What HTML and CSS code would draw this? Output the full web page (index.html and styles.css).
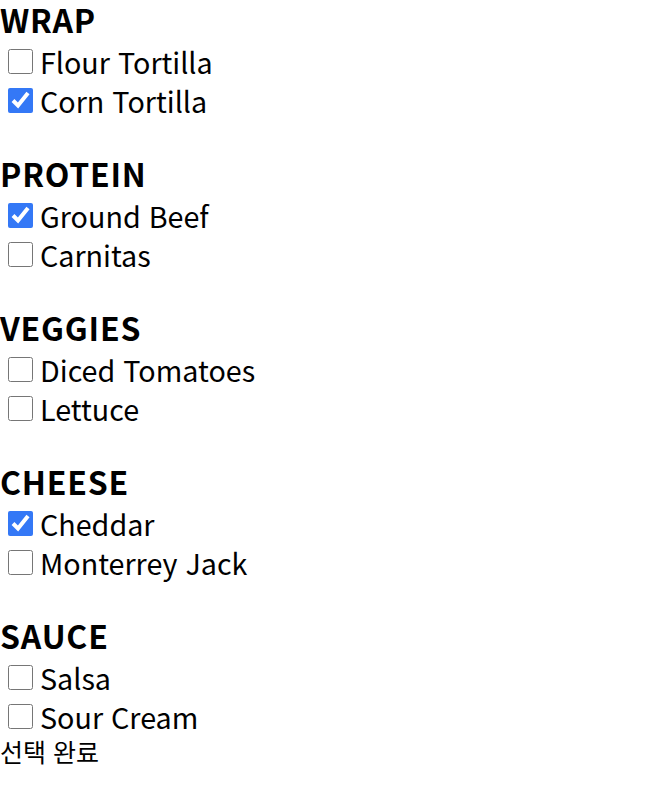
FILE: index.html
```html
<!DOCTYPE html>
<html lang="ko">
<head>
<meta charset="utf-8">
<link rel="stylesheet" href="styles.css">
</head>
<body>
<form class="menu">
  <section class="group">
    <h2 class="group-title">WRAP</h2>
    <label class="option"><input type="checkbox" class="box"><span>Flour Tortilla</span></label>
    <label class="option"><input type="checkbox" class="box" checked><span>Corn Tortilla</span></label>
  </section>
  <section class="group">
    <h2 class="group-title">PROTEIN</h2>
    <label class="option"><input type="checkbox" class="box" checked><span>Ground Beef</span></label>
    <label class="option"><input type="checkbox" class="box"><span>Carnitas</span></label>
  </section>
  <section class="group">
    <h2 class="group-title">VEGGIES</h2>
    <label class="option"><input type="checkbox" class="box"><span>Diced Tomatoes</span></label>
    <label class="option"><input type="checkbox" class="box"><span>Lettuce</span></label>
  </section>
  <section class="group">
    <h2 class="group-title">CHEESE</h2>
    <label class="option"><input type="checkbox" class="box" checked><span>Cheddar</span></label>
    <label class="option"><input type="checkbox" class="box"><span>Monterrey Jack</span></label>
  </section>
  <section class="group last">
    <h2 class="group-title">SAUCE</h2>
    <label class="option"><input type="checkbox" class="box"><span>Salsa</span></label>
    <label class="option"><input type="checkbox" class="box"><span>Sour Cream</span></label>
  </section>
  <div class="done">선택 완료</div>
</form>
</body>
</html>
```
FILE: styles.css
```css
html, body {
  margin: 0;
  padding: 0;
  background: #fff;
}
body {
  font-family: "Noto Sans CJK KR", "Noto Sans", sans-serif;
  color: #000;
}
.menu {
  display: flex;
  flex-direction: column;
}
.group {
  display: flex;
  flex-direction: column;
  margin-bottom: 34px;
}
.group.last {
  margin-bottom: 0;
}
.group-title {
  margin: 0 0 4px;
  font-size: 32px;
  font-weight: 700;
  letter-spacing: 0.8px;
  line-height: 38px;
}
.option {
  display: flex;
  align-items: center;
  height: 39px;
  font-size: 28.7px;
  line-height: 39px;
}
.box {
  width: 25px;
  height: 25px;
  margin: 0 7px 0 8px;
  accent-color: #3478f6;
}
.done {
  font-size: 25px;
  line-height: 30px;
}
```
